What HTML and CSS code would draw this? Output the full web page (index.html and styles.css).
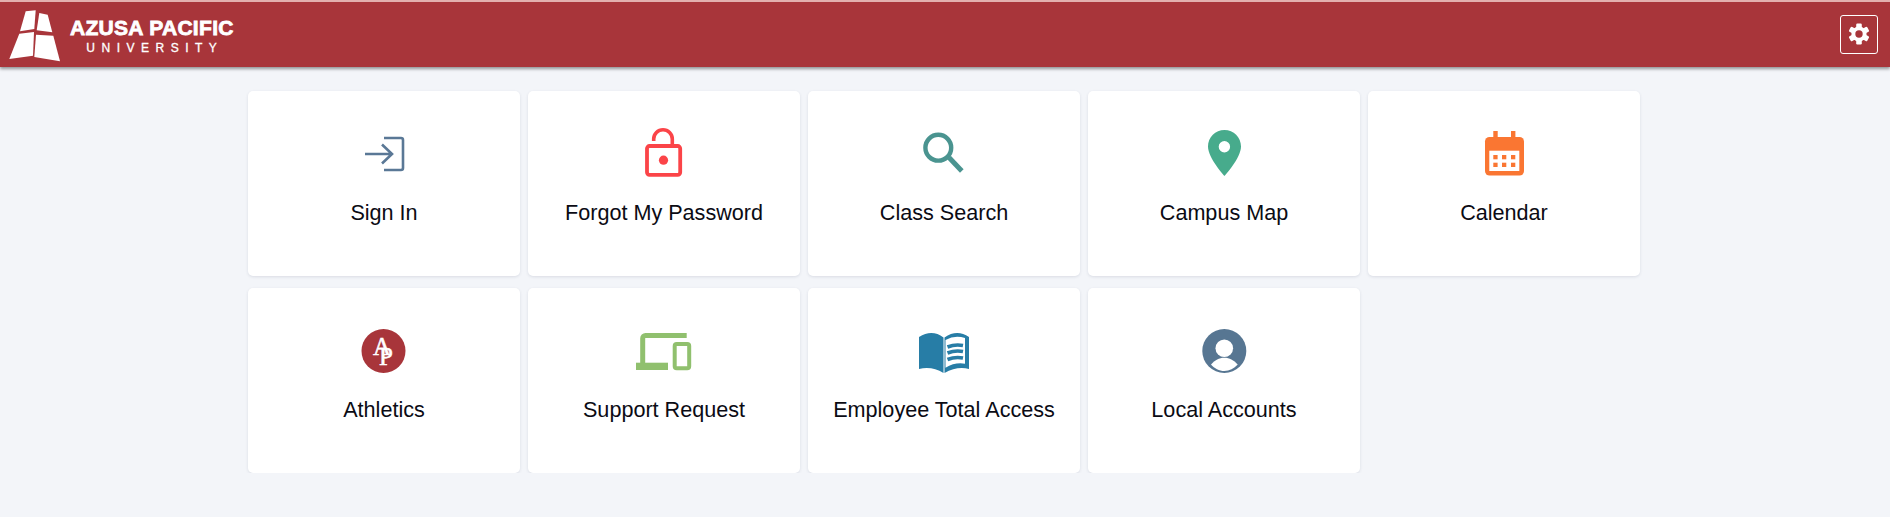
FILE: index.html
```html
<!DOCTYPE html>
<html lang="en">
<head>
  <meta charset="UTF-8" />
  <title>Azusa Pacific University</title>
  <link rel="stylesheet" href="styles.css">
</head>
<body>

  <!-- Top bar -->
  <header class="topbar">
    <a class="brand" href="#">
      <svg class="brand-mark" viewBox="0 0 60 60" width="60" height="60">
        <polygon fill="#fff" points="25.7,8.3 35.7,7.3 34.3,26 20,28.3" />
        <polygon fill="#fff" points="39.3,10 47.7,11.7 52.3,29.3 36.7,27.3" />
        <polygon fill="#fff" points="19.3,30.7 34,29 33,52.7 9.3,56" />
        <polygon fill="#fff" points="36,31.7 53.3,32.7 60,58.3 34.3,54" />
      </svg>
      <span class="brand-text">
        <span class="brand-name">AZUSA PACIFIC</span>
        <span class="brand-sub">UNIVERSITY</span>
      </span>
    </a>
    <button class="settings-btn" aria-label="Settings">
      <svg viewBox="0 0 24 24" width="24" height="24">
        <g fill="#fff">
          <rect x="9.200" y="1.500" width="5.600" height="21" rx="1.200" />
          <rect x="9.200" y="1.500" width="5.600" height="21" rx="1.200" transform="rotate(60 12 12)" />
          <rect x="9.200" y="1.500" width="5.600" height="21" rx="1.200" transform="rotate(120 12 12)" />
          <circle cx="12" cy="12" r="7.600" />
        </g>
        <circle cx="12" cy="12" r="3.700" fill="#a8353a" />
      </svg>
    </button>
  </header>

  <!-- Tiles -->
  <main class="tiles">

    <a class="tile" href="#">
      <svg class="tile-icon" viewBox="0 0 64 64">
        <path d="M13 32h27M30 22.500l10 9.500-10 9.500M32 16h17a2 2 0 0 1 2 2v28a2 2 0 0 1-2 2H32" fill="none" stroke="#5a7896" stroke-width="2.600" />
      </svg>
      <span class="tile-label">Sign In</span>
    </a>

    <a class="tile" href="#">
      <svg class="tile-icon" viewBox="0 0 64 64">
        <rect x="15" y="24" width="33.200" height="28.800" rx="2.500" fill="none" stroke="#fb4448" stroke-width="3.800" />
        <path d="M21.700 19v-2a9.300 9.300 0 0 1 18.600 0V24" fill="none" stroke="#fb4448" stroke-width="3.600" />
        <circle cx="31.500" cy="38.200" r="4.600" fill="#fb4448" />
      </svg>
      <span class="tile-label">Forgot My Password</span>
    </a>

    <a class="tile" href="#">
      <svg class="tile-icon" viewBox="0 0 64 64">
        <circle cx="26.300" cy="25.700" r="12.900" fill="none" stroke="#4a9490" stroke-width="4.400" />
        <path d="M37 35.500L49.800 48.900" fill="none" stroke="#4a9490" stroke-width="5" />
      </svg>
      <span class="tile-label">Class Search</span>
    </a>

    <a class="tile" href="#">
      <svg class="tile-icon" viewBox="0 0 64 64">
        <path fill-rule="evenodd" fill="#47ab8c" d="M32.500 8C23.400 8 16 15.400 16 24.500 16 36 32.500 54 32.500 54S49 36 49 24.500C49 15.400 41.600 8 32.500 8zM32.400 19a5.700 5.700 0 1 1 0 11.400 5.700 5.700 0 0 1 0-11.400z" />
      </svg>
      <span class="tile-label">Campus Map</span>
    </a>

    <a class="tile" href="#">
      <svg class="tile-icon" viewBox="0 0 64 64">
        <g fill="#fa7632">
          <rect x="21.300" y="9" width="4.400" height="8" />
          <rect x="39" y="9" width="4.400" height="8" />
          <rect x="13" y="15" width="39" height="38.500" rx="4.500" />
        </g>
        <rect x="17.300" y="28.700" width="30" height="20.300" fill="#fff" />
        <g fill="#fa7632">
          <rect x="21.300" y="33" width="4.300" height="4.300" />
          <rect x="30" y="33" width="4.300" height="4.300" />
          <rect x="39" y="33" width="4.300" height="4.300" />
          <rect x="21.300" y="40.700" width="4.300" height="4.300" />
          <rect x="30" y="40.700" width="4.300" height="4.300" />
          <rect x="39" y="40.700" width="4.300" height="4.300" />
        </g>
      </svg>
      <span class="tile-label">Calendar</span>
    </a>

    <a class="tile" href="#">
      <svg class="tile-icon" viewBox="0 0 64 64">
        <circle cx="31.500" cy="32" r="22" fill="#a8353a" />
        <text class="monogram" x="21" y="36">A<tspan dx="-12" dy="10">P</tspan></text>
      </svg>
      <span class="tile-label">Athletics</span>
    </a>

    <a class="tile" href="#">
      <svg class="tile-icon" viewBox="0 0 64 64">
        <path d="M54.700 16.500H13.500a2.800 2.800 0 0 0-2.800 2.800V44" fill="none" stroke="#90c06e" stroke-width="5" />
        <rect x="4" y="43.700" width="32" height="7.300" fill="#90c06e" />
        <rect x="42.700" y="25" width="14.500" height="24.200" rx="2" fill="none" stroke="#90c06e" stroke-width="4" />
      </svg>
      <span class="tile-label">Support Request</span>
    </a>

    <a class="tile" href="#">
      <svg class="tile-icon" viewBox="0 0 64 64">
        <path fill="#277da6" d="M7 18Q20 10 31.500 18.500V54Q20 47 7 50Z" />
        <path fill="#277da6" d="M32.500 18.500Q45 10 57 18V50Q45 47 32.500 54Z" />
        <path fill="#fff" d="M33.500 21Q43 15.500 53 19V44.700Q43 43 33.500 48.700Z" />
        <path d="M35.500 28Q43 25 51 26.500M35.500 34Q43 31 51 32.500M35.500 40.500Q43 37.500 51 39" fill="none" stroke="#277da6" stroke-width="3.700" />
      </svg>
      <span class="tile-label">Employee Total Access</span>
    </a>

    <a class="tile" href="#">
      <svg class="tile-icon" viewBox="0 0 64 64">
        <circle cx="32.300" cy="32" r="22" fill="#577692" />
        <circle cx="32.300" cy="29.300" r="8.800" fill="#fff" />
        <path fill="#fff" d="M19 45.500C23 41 27 38.700 32.300 38.700S41.500 41 45.700 45.500C42 49.500 37.500 52 32.300 52S22.500 49.500 19 45.500Z" />
      </svg>
      <span class="tile-label">Local Accounts</span>
    </a>

  </main>
</body>
</html>
```

FILE: styles.css
```css
body {
  margin: 0;
  background: #f3f5f9;
  font-family: "Liberation Sans", Arial, sans-serif;
  color: #0b0b14;
}
a {
  color: inherit;
  text-decoration: none;
}

/* top bar */
.topbar {
  display: flex;
  align-items: center;
  justify-content: space-between;
  height: 65px;
  padding-right: 12px;
  background: #a8353a;
  border-top: 2px solid #e3b0ae;
  box-shadow: 0 2px 3px rgba(0, 0, 0, 0.4);
}
.brand {
  display: flex;
  align-items: center;
  color: #fff;
}
.brand-mark {
  display: block;
  margin-top: -3px;
}
.brand-text {
  display: flex;
  flex-direction: column;
  align-items: center;
  margin-left: 10px;
  margin-top: 2px;
}
.brand-name {
  font-size: 21px;
  line-height: 22px;
  font-weight: 700;
  letter-spacing: 0.3px;
  -webkit-text-stroke: 0.8px #fff;
}
.brand-sub {
  font-size: 12px;
  line-height: 14px;
  letter-spacing: 6.5px;
  margin-top: 2px;
  margin-right: -6px;
  -webkit-text-stroke: 0.3px #fff;
}
.settings-btn {
  display: flex;
  align-items: center;
  justify-content: center;
  width: 38px;
  height: 39px;
  padding: 0;
  margin-top: -1px;
  background: transparent;
  border: 1px solid #fff;
  border-radius: 3px;
}

/* tiles */
.tiles {
  display: grid;
  grid-template-columns: repeat(5, 272px);
  column-gap: 8px;
  row-gap: 12px;
  margin: 24px 0 0 248px;
}
.tile {
  display: flex;
  flex-direction: column;
  align-items: center;
  height: 185px;
  padding-top: 31px;
  box-sizing: border-box;
  background: #fff;
  border-radius: 5px;
  box-shadow: 0 1px 3px rgba(40, 50, 80, 0.12);
}
.tile-icon {
  display: block;
  width: 64px;
  height: 64px;
}
.tile-label {
  margin-top: 14px;
  font-size: 21.6px;
  line-height: 26px;
}
.monogram {
  font-family: "Liberation Serif", serif;
  font-size: 25px;
  fill: #fff;
  stroke: #fff;
  stroke-width: 0.5px;
}
```
